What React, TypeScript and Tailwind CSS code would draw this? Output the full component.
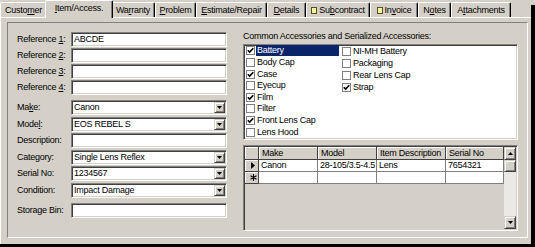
import React from "react";

const sunken =
  "border border-t-[#808080] border-l-[#808080] border-r-white border-b-white shadow-[inset_1px_1px_0_#404040,inset_-1px_-1px_0_#d4d0c8]";
const raised =
  "bg-[#d4d0c8] border border-t-[#d4d0c8] border-l-[#d4d0c8] border-r-[#404040] border-b-[#404040] shadow-[inset_1px_1px_0_#fff,inset_-1px_-1px_0_#808080]";
const hdr =
  "h-full bg-[#d4d0c8] border-r border-b border-r-[#404040] border-b-[#404040] shadow-[inset_1px_1px_0_#fff] pl-[3px] flex items-center overflow-hidden whitespace-nowrap";
const cell =
  "h-full bg-white border-r border-b border-[#808080] pl-[2px] flex items-center overflow-hidden whitespace-nowrap";

function Tab({ w, children }: { w: string; children: React.ReactNode }) {
  return (
    <div
      className={`${w} h-[15px] shrink-0 rounded-t-[2px] border-l border-t border-r border-l-white border-t-white border-r-black shadow-[inset_-1px_0_0_#808080] flex items-center justify-center whitespace-nowrap`}
    >
      {children}
    </div>
  );
}

function Flag() {
  return <span className="inline-block w-[6px] h-[7px] mr-[2px] border border-[#505020] bg-[#f4f4a0]" />;
}

function DownTri() {
  return (
    <svg width="5" height="3" viewBox="0 0 5 3">
      <path d="M0 0H5L2.5 3Z" fill="#000" />
    </svg>
  );
}

function Field({ value }: { value?: string }) {
  return (
    <div className={`w-[156px] h-[15px] bg-white ${sunken} flex items-center pl-[2px] overflow-hidden whitespace-nowrap`}>
      {value}
    </div>
  );
}

function Combo({ value }: { value?: string }) {
  return (
    <div className={`w-[156px] h-[15px] bg-white ${sunken} flex items-center p-[1px]`}>
      <span className="flex-1 pl-[1px] overflow-hidden whitespace-nowrap">{value}</span>
      <div className={`w-[11px] h-[11px] ${raised} flex items-center justify-center`}>
        <DownTri />
      </div>
    </div>
  );
}

function Row({ label, children }: { label: React.ReactNode; children: React.ReactNode }) {
  return (
    <div className="flex items-center h-[15px]">
      <div className="w-[54px] shrink-0 whitespace-nowrap">{label}</div>
      {children}
    </div>
  );
}

function Check({ checked }: { checked?: boolean }) {
  return (
    <div className="w-[9px] h-[9px] shrink-0 bg-white border border-[#808080] flex items-center justify-center">
      {checked && (
        <svg width="7" height="7" viewBox="0 0 7 7">
          <path d="M0.8 3.2L2.6 5.1L6.3 1.2" stroke="#000" strokeWidth="1.6" fill="none" />
        </svg>
      )}
    </div>
  );
}

function Item({ label, checked, sel }: { label: string; checked?: boolean; sel?: boolean }) {
  return (
    <div className="flex items-center h-[12px]">
      <Check checked={checked} />
      <span
        className={
          sel
            ? "ml-[1px] w-[83px] h-[11px] leading-[11px] pl-[1px] bg-[#0a246a] text-white whitespace-nowrap"
            : "ml-[1px] pl-[1px] whitespace-nowrap"
        }
      >
        {label}
      </span>
    </div>
  );
}

export default function App() {
  return (
    <div className="w-[535px] h-[247px] flex flex-col bg-[#d4d0c8] text-black text-[9px] tracking-[-0.25px] leading-none font-['Liberation_Sans',Arial,sans-serif] overflow-hidden">
      <div className="flex flex-1 min-h-0">
        <div className="w-[531px] flex flex-col">
          {/* Tabs */}
          <div className="flex items-end h-[17px] shrink-0">
            <Tab w="w-[47px]">
              Custo<u>m</u>er
            </Tab>
            <div className="relative z-10 -mx-[2px] -mb-[1px] w-[68px] h-[18px] shrink-0 rounded-t-[2px] bg-[#d4d0c8] border-l border-t border-r border-l-white border-t-white border-r-black shadow-[inset_-1px_0_0_#808080] flex items-center justify-center pb-[2px] whitespace-nowrap">
              <u>I</u>tem/Access.
            </div>
            <Tab w="w-[44px]">
              Wa<u>r</u>ranty
            </Tab>
            <Tab w="w-[41px]">
              <u>P</u>roblem
            </Tab>
            <Tab w="w-[71px]">
              <u>E</u>stimate/Repair
            </Tab>
            <Tab w="w-[39px]">
              <u>D</u>etails
            </Tab>
            <Tab w="w-[64px]">
              <Flag />
              Su<u>b</u>contract
            </Tab>
            <Tab w="w-[48px]">
              <Flag />
              In<u>v</u>oice
            </Tab>
            <Tab w="w-[33px]">
              N<u>o</u>tes
            </Tab>
            <Tab w="w-[60px]">
              A<u>t</u>tachments
            </Tab>
          </div>

          {/* Page */}
          <div className="flex-1 border-t border-l border-white">
            <div className="ml-[6px] mt-[4px] w-[521px] h-[216px] border border-t-[#808080] border-l-[#808080] border-r-white border-b-white flex">
              {/* Left column */}
              <div className="pl-[9px] pt-[9px] flex flex-col">
                <div className="flex flex-col gap-[1px]">
                  <Row label={<>Reference <u>1</u>:</>}>
                    <Field value="ABCDE" />
                  </Row>
                  <Row label={<>Reference <u>2</u>:</>}>
                    <Field />
                  </Row>
                  <Row label={<>Reference <u>3</u>:</>}>
                    <Field />
                  </Row>
                  <Row label={<>Reference <u>4</u>:</>}>
                    <Field />
                  </Row>
                </div>
                <div className="mt-[5px] flex flex-col gap-[1.5px]">
                  <Row label={<>Ma<u>k</u>e:</>}>
                    <Combo value="Canon" />
                  </Row>
                  <Row label={<>Mode<u>l</u>:</>}>
                    <Combo value="EOS REBEL S" />
                  </Row>
                  <Row label="Description:">
                    <Field />
                  </Row>
                  <Row label="Category:">
                    <Combo value="Single Lens Reflex" />
                  </Row>
                  <Row label="Serial No:">
                    <Combo value="1234567" />
                  </Row>
                  <Row label="Condition:">
                    <Combo value="Impact Damage" />
                  </Row>
                </div>
                <div className="mt-[5.5px]">
                  <Row label="Storage Bin:">
                    <Field />
                  </Row>
                </div>
              </div>

              {/* Right column */}
              <div className="ml-[16px] w-[275px] pt-[7px] flex flex-col">
                <div className="h-[12px] leading-[12px] whitespace-nowrap">
                  Common Accessories and Serialized Accessories:
                </div>
                <div className={`mt-[2px] h-[96px] bg-white ${sunken} p-[1px] flex`}>
                  <div className="w-[97px] pl-[1px] -mt-[1px] flex flex-col">
                    <Item label="Battery" checked sel />
                    <Item label="Body Cap" />
                    <Item label="Case" checked />
                    <Item label="Eyecup" />
                    <Item label="Film" checked />
                    <Item label="Filter" />
                    <Item label="Front Lens Cap" checked />
                    <Item label="Lens Hood" />
                  </div>
                  <div className="-mt-[1px] flex flex-col">
                    <Item label="NI-MH Battery" />
                    <Item label="Packaging" />
                    <Item label="Rear Lens Cap" />
                    <Item label="Strap" checked />
                  </div>
                </div>

                <div className={`mt-[5px] h-[86px] ${sunken} p-[1px] flex`}>
                  <div className="flex-1 bg-[#d4d0c8] flex flex-col">
                    <div className="flex h-[13px]">
                      <div className={`w-[14px] ${hdr}`} />
                      <div className={`w-[59px] ${hdr}`}>Make</div>
                      <div className={`w-[59px] ${hdr}`}>Model</div>
                      <div className={`w-[69px] ${hdr}`}>Item Description</div>
                      <div className={`w-[58px] ${hdr}`}>Serial No</div>
                    </div>
                    <div className="flex h-[12px]">
                      <div className={`w-[14px] ${hdr} justify-center pl-0`}>
                        <svg width="4" height="7" viewBox="0 0 4 7">
                          <path d="M0 0L4 3.5L0 7Z" fill="#000" />
                        </svg>
                      </div>
                      <div className={`w-[59px] ${cell}`}>Canon</div>
                      <div className={`w-[59px] ${cell}`}>28-105/3.5-4.5</div>
                      <div className={`w-[69px] ${cell}`}>Lens</div>
                      <div className={`w-[58px] ${cell}`}>7654321</div>
                    </div>
                    <div className="flex h-[12px]">
                      <div className={`w-[14px] ${hdr} justify-center pl-0`}>
                        <svg width="7" height="7" viewBox="0 0 7 7">
                          <path d="M3.5 0V7M0.5 1.8L6.5 5.2M0.5 5.2L6.5 1.8" stroke="#000" strokeWidth="1.1" />
                        </svg>
                      </div>
                      <div className={`w-[59px] ${cell}`} />
                      <div className={`w-[59px] ${cell}`} />
                      <div className={`w-[69px] ${cell}`} />
                      <div className={`w-[58px] ${cell}`} />
                    </div>
                  </div>
                  <div className="w-[12px] flex flex-col">
                    <div className={`h-[13px] ${raised} flex items-center justify-center`}>
                      <svg width="5" height="3" viewBox="0 0 5 3">
                        <path d="M0 3H5L2.5 0Z" fill="#000" />
                      </svg>
                    </div>
                    <div className={`h-[12px] ${raised}`} />
                    <div className="flex-1 bg-[#ebe9e5]" />
                    <div className={`h-[13px] ${raised} flex items-center justify-center`}>
                      <DownTri />
                    </div>
                  </div>
                </div>
              </div>
            </div>
          </div>
        </div>
        <div className="w-[4px] mt-[5px] bg-black" />
      </div>
      <div className="h-[3px] bg-black shrink-0" />
    </div>
  );
}
